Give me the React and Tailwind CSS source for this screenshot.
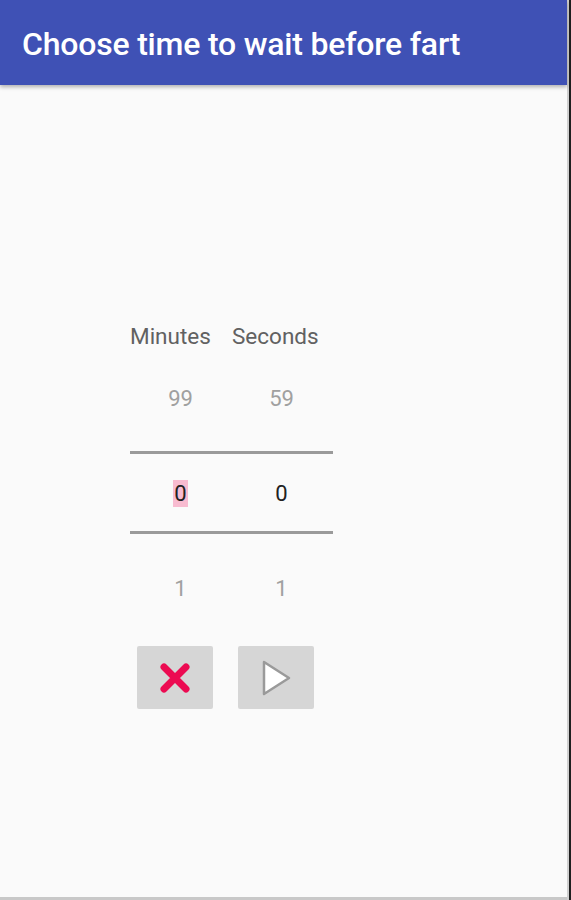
import React from 'react';

const font = { fontFamily: 'Roboto, "Noto Sans", sans-serif' };

const PickerColumn = ({ above, value, below, highlight }) => (
  <div className="flex flex-col items-center w-[101px]">
    <div className="h-[95px] flex items-center justify-center text-[22px] text-[#a0a0a0]">{above}</div>
    <div className="h-[95px] flex items-center justify-center text-[22px] text-[#212121]">
      <span className={highlight ? 'bg-[#f8bbd0] px-[1px] leading-[27px]' : 'leading-[27px]'}>{value}</span>
    </div>
    <div className="h-[95px] flex items-center justify-center text-[22px] text-[#a0a0a0]">{below}</div>
  </div>
);

const App = () => {
  return (
    <div className="flex w-[571px] h-[900px] bg-[#fafafa] overflow-hidden" style={font}>
      <div className="flex flex-col flex-1">
        <header className="h-[85px] bg-[#3f51b5] flex items-center pl-[22px] shadow-[0_2px_4px_rgba(0,0,0,0.3)] z-10">
          <h1 className="text-white text-[32px] font-medium tracking-[-0.2px] mt-[2px]">Choose time to wait before fart</h1>
        </header>
        <main className="flex-1 pl-[130px] pt-[236px]">
          <div className="flex w-[203px] h-[30px] leading-[30px] text-[22.5px] text-[#616161]">
            <div className="w-[102px]">Minutes</div>
            <div>Seconds</div>
          </div>
          <div className="relative flex w-[203px]">
            <PickerColumn above="99" value="0" below="1" highlight />
            <PickerColumn above="59" value="0" below="1" />
            <div className="absolute left-0 right-0 top-[100px] h-[3px] bg-[#9a9a9a]" />
            <div className="absolute left-0 right-0 top-[180px] h-[3px] bg-[#9a9a9a]" />
          </div>
          <div className="flex gap-[25px] ml-[7px] mt-[10px]">
            <button className="w-[76px] h-[63px] bg-[#d6d6d6] rounded-[2px] flex items-center justify-center">
              <svg width="32" height="32" viewBox="0 0 32 32">
                <path d="M5 5 L27 27 M27 5 L5 27" stroke="#ec0b52" strokeWidth="7" strokeLinecap="round" />
              </svg>
            </button>
            <button className="w-[76px] h-[63px] bg-[#d6d6d6] rounded-[2px] flex items-center justify-center">
              <svg width="36" height="40" viewBox="0 0 36 40">
                <path d="M6 4 L31 20 L6 36 Z" fill="#ffffff" stroke="#9a9a9a" strokeWidth="2.5" strokeLinejoin="round" />
              </svg>
            </button>
          </div>
        </main>
        <div className="h-[3px] bg-[#c8c8c8]" />
      </div>
      <div className="w-[2px] bg-[#d0d0d0]" />
      <div className="w-[2px] bg-[#1f1f1f]" />
    </div>
  );
};

export default App;
